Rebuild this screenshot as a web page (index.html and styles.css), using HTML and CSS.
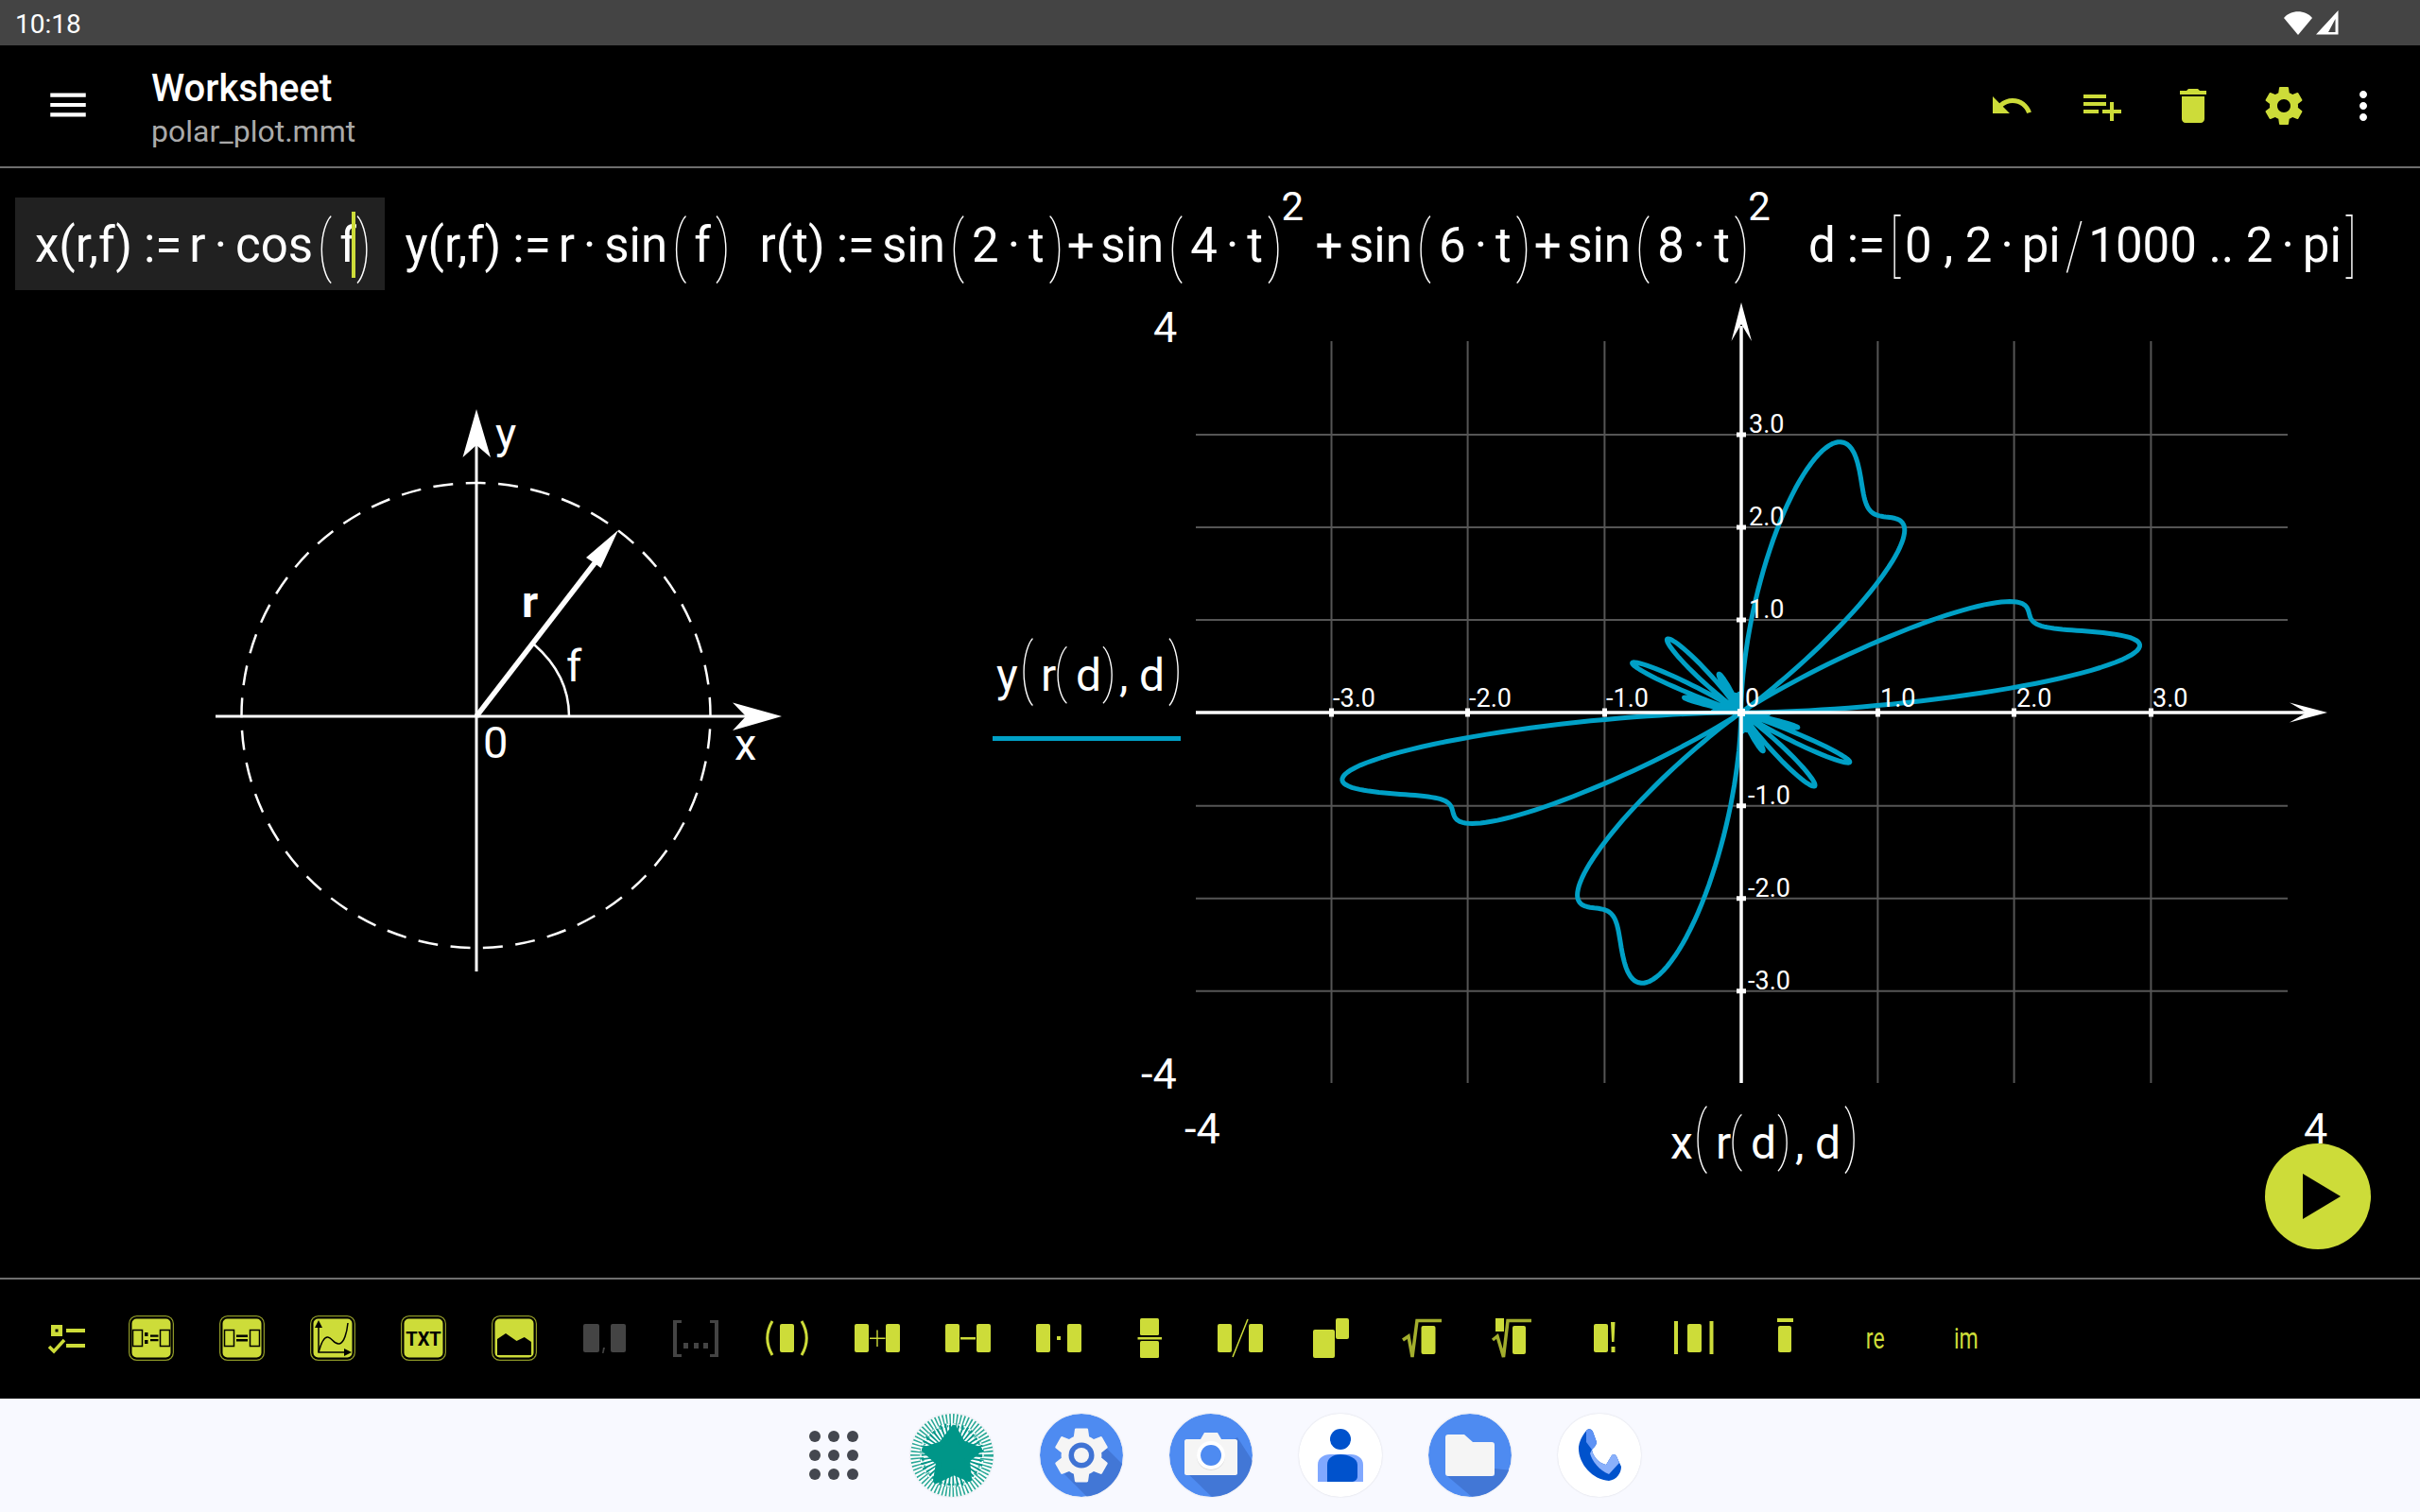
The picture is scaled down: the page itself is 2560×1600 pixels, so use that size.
FILE: index.html
```html
<!DOCTYPE html>
<html lang="en">
<head>
    <meta charset="UTF-8" />
    <title>Worksheet - polar_plot.mmt</title>
    <link rel="stylesheet" href="styles.css">
</head>
<body>

<div class="status-bar">
    <span class="status-time">10:18</span>
    <div class="status-icons">
        <svg width="30" height="25" viewBox="0 0 30 25"><path d="M0 7C7-2 23-2 30 7L15 25Z" fill="#fff"/></svg>
        <svg width="24" height="26" viewBox="0 0 24 26"><path fill-rule="evenodd" d="M23.5 0V25.500H0ZM20.500 9 13 23H20.500Z" fill="#fff"/></svg>
    </div>
</div>

<header class="app-bar">
    <svg class="menu-icon" viewBox="0 0 24 24"><path d="M3 18h18v-2H3v2zm0-5h18v-2H3v2zM3 6v2h18V6H3z" fill="#fff"/></svg>
    <div class="app-title">
        <div class="title-main">Worksheet</div>
        <div class="title-sub">polar_plot.mmt</div>
    </div>
    <div class="app-actions">
        <svg class="action" viewBox="0 0 24 24"><path d="M12.500 8c-2.650 0-5.050.99-6.900 2.600L2 7v9h9l-3.620-3.620c1.390-1.160 3.160-1.880 5.120-1.880 3.540 0 6.550 2.310 7.600 5.500l2.370-.78C21.080 11.030 17.150 8 12.500 8z"/></svg>
        <svg class="action" viewBox="0 0 24 24"><path d="M14 10H2v2h12v-2zm0-4H2v2h12V6zm4 8v-4h-2v4h-4v2h4v4h2v-4h4v-2h-4zM2 16h8v-2H2v2z"/></svg>
        <svg class="action" viewBox="0 0 24 24"><path d="M6 19c0 1.100.9 2 2 2h8c1.100 0 2-.9 2-2V7H6v12zM19 4h-3.500l-1-1h-5l-1 1H5v2h14V4z"/></svg>
        <svg class="action" viewBox="0 0 24 24"><path d="M19.430 12.980c.04-.32.07-.64.07-.98s-.03-.66-.07-.98l2.110-1.650c.19-.15.24-.42.12-.64l-2-3.460c-.12-.22-.39-.3-.61-.22l-2.490 1c-.52-.4-1.080-.73-1.690-.98l-.38-2.650C14.460 2.180 14.250 2 14 2h-4c-.25 0-.46.18-.49.42l-.38 2.650c-.61.25-1.170.59-1.690.98l-2.490-1c-.23-.09-.49 0-.61.22l-2 3.460c-.13.22-.07.49.12.64l2.110 1.650c-.04.32-.07.65-.07.98s.03.66.07.98l-2.110 1.650c-.19.15-.24.42-.12.64l2 3.460c.12.22.39.3.61.22l2.490-1c.52.4 1.080.73 1.690.98l.38 2.650c.03.24.24.42.49.42h4c.25 0 .46-.18.49-.42l.38-2.650c.61-.25 1.170-.59 1.690-.98l2.490 1c.23.09.49 0 .61-.22l2-3.460c.12-.22.07-.49-.12-.64l-2.010-1.650zM12 15.500c-1.930 0-3.500-1.570-3.500-3.500s1.570-3.500 3.500-3.500 3.500 1.570 3.500 3.500-1.570 3.500-3.500 3.500z"/></svg>
        <svg class="action action-more" viewBox="0 0 24 24"><path d="M12 8c1.100 0 2-.9 2-2s-.9-2-2-2-2 .9-2 2 .9 2 2 2zm0 2c-1.100 0-2 .9-2 2s.9 2 2 2 2-.9 2-2-.9-2-2-2zm0 6c-1.100 0-2 .9-2 2s.9 2 2 2 2-.9 2-2-.9-2-2-2z"/></svg>
    </div>
</header>

<main class="worksheet">
    <div class="formula-row">
        <div class="formula active">
            <span>x(r,f)</span><span class="wide">:=</span><span>r</span><span class="dot">·</span><span>cos</span><span class="big open">(</span><span>f</span><span class="caret"></span><span class="big">)</span>
        </div>
        <div class="formula">
            <span>y(r,f)</span><span class="wide">:=</span><span>r</span><span class="dot">·</span><span>sin</span><span class="big open">(</span><span>f</span><span class="big">)</span>
        </div>
        <div class="formula">
            <span>r(t)</span><span class="wide">:=</span><span>sin</span><span class="big open">(</span><span>2</span><span class="dot">·</span><span>t</span><span class="big">)</span><span class="plus">+</span><span>sin</span><span class="big open">(</span><span>4</span><span class="dot">·</span><span>t</span><span class="big">)</span><span class="sup">2</span><span class="plus">+</span><span>sin</span><span class="big open">(</span><span>6</span><span class="dot">·</span><span>t</span><span class="big">)</span><span class="plus">+</span><span>sin</span><span class="big open">(</span><span>8</span><span class="dot">·</span><span>t</span><span class="big">)</span><span class="sup">2</span>
        </div>
        <div class="formula">
            <span>d</span><span class="wide">:=</span><span class="big">[</span><span>0</span><span class="spaced">,</span><span>2</span><span class="dot">·</span><span>pi</span><span class="big">/</span><span>1000</span><span class="spaced">..</span><span>2</span><span class="dot">·</span><span>pi</span><span class="big">]</span>
        </div>
    </div>

    <div class="canvas-row">
        <!-- viewBoxes keep screen coordinates so the drawings are easy to check -->
        <svg class="picture" viewBox="220 420 640 620">
            <ellipse cx="503.500" cy="757" rx="248" ry="246" fill="none" stroke="#fff" stroke-width="2.500" stroke-dasharray="21 13.490" stroke-dashoffset="20"/>
            <path d="M228 758H790M504 1028V470" stroke="#fff" stroke-width="3" fill="none"/>
            <path d="M504 433 519 484 504 471 489.500 484Z M827 758 775 773 789 758 775 743.500Z" fill="#fff"/>
            <path d="M504 758 632 592" stroke="#fff" stroke-width="5.500"/>
            <path d="M654 561 635.500 601 629 596 620 590Z" fill="#fff"/>
            <path d="M602 758C602 728 588 702 565 682" stroke="#fff" stroke-width="2.500" fill="none"/>
            <text class="pic-text" x="524" y="475">y</text>
            <text class="pic-text pic-bold" x="552" y="653">r</text>
            <text class="pic-text" x="599" y="721">f</text>
            <text class="pic-text" x="511" y="802">0</text>
            <text class="pic-text" x="777" y="804">x</text>
        </svg>

        <svg class="plot" viewBox="1040 316 1440 940">
            <g class="grid">
                <path d="M1408.500 361V1146M1552.600 361V1146M1697.400 361V1146M1986.400 361V1146M2130.600 361V1146M2275.400 361V1146"/>
                <path d="M1265 460H2420M1265 558H2420M1265 656H2420M1265 852.700H2420M1265 950.700H2420M1265 1048.700H2420"/>
            </g>
            <path id="curve" class="curve" d=""/>
            <path d="M1265 754H2445M1842 1146V345" stroke="#fff" stroke-width="3.500" fill="none"/>
            <path d="M2462 754 2422 743.500 2440 754 2422 764.500Z M1842 320 1831.500 361 1842 343 1853 361Z" fill="#fff"/>
            <path d="M1406 749.500h5v9h-5zM1550 749.500h5v9h-5zM1695 749.500h5v9h-5zM1984 749.500h5v9h-5zM2128 749.500h5v9h-5zM2273 749.500h5v9h-5zM1837 457.500h10v5h-10zM1837 555.500h10v5h-10zM1837 653.500h10v5h-10zM1837 850.200h10v5h-10zM1837 948.200h10v5h-10zM1837 1046.200h10v5h-10zM1838 750h8v8h-8z" fill="#fff"/>

            <text class="tick" x="1410" y="748">-3.0</text>
            <text class="tick" x="1554" y="748">-2.0</text>
            <text class="tick" x="1699" y="748">-1.0</text>
            <text class="tick" x="1846" y="748">0</text>
            <text class="tick" x="1989" y="748">1.0</text>
            <text class="tick" x="2133" y="748">2.0</text>
            <text class="tick" x="2277" y="748">3.0</text>
            <text class="tick" x="1850" y="458">3.0</text>
            <text class="tick" x="1850" y="556">2.0</text>
            <text class="tick" x="1850" y="654">1.0</text>
            <text class="tick" x="1849" y="851">-1.0</text>
            <text class="tick" x="1849" y="949">-2.0</text>
            <text class="tick" x="1849" y="1047">-3.0</text>

            <text class="range" x="1220" y="362">4</text>
            <text class="range" x="1207" y="1152">-4</text>
            <text class="range" x="1253" y="1210">-4</text>
            <text class="range" x="2437" y="1210">4</text>

            <text class="axis-label" x="1054" y="731">y</text>
            <text class="axis-paren" transform="translate(1079 731) scale(1 1.470)">(</text>
            <text class="axis-label" x="1101" y="731">r</text>
            <text class="axis-paren" transform="translate(1115 731) scale(1 1.220)">(</text>
            <text class="axis-label" x="1138" y="731">d</text>
            <text class="axis-paren" transform="translate(1166 731) scale(1 1.220)">)</text>
            <text class="axis-label" x="1184" y="731">,</text>
            <text class="axis-label" x="1205" y="731">d</text>
            <text class="axis-paren" transform="translate(1236 731) scale(1 1.470)">)</text>
            <rect x="1050" y="779" width="199" height="5" fill="#00a0c6"/>

            <text class="axis-label" x="1767" y="1226">x</text>
            <text class="axis-paren" transform="translate(1792 1226) scale(1 1.470)">(</text>
            <text class="axis-label" x="1815" y="1226">r</text>
            <text class="axis-paren" transform="translate(1829 1226) scale(1 1.220)">(</text>
            <text class="axis-label" x="1852" y="1226">d</text>
            <text class="axis-paren" transform="translate(1880 1226) scale(1 1.220)">)</text>
            <text class="axis-label" x="1899" y="1226">,</text>
            <text class="axis-label" x="1920" y="1226">d</text>
            <text class="axis-paren" transform="translate(1951 1226) scale(1 1.470)">)</text>
        </svg>
    </div>

    <button class="run-button">
        <svg width="40" height="48" viewBox="0 0 40 48"><path d="M0 0 40 24 0 48Z"/></svg>
    </button>
</main>

<footer class="toolbar">
    <svg class="tool tool-list" viewBox="0 0 48 48">
        <path fill-rule="evenodd" d="M6 10h12v12H6zM10.500 14.500v3h3v-3z"/>
        <path d="M22 14h20v4H22zM22 30h20v4H22z"/>
        <path d="M4 33l5 5 11-12" fill="none" stroke="currentColor" stroke-width="3.500"/>
    </svg>
    <svg class="tool" viewBox="0 0 48 48">
        <rect class="btn-rim" x=".75" y=".75" width="46.500" height="46.500" rx="8"/><rect class="btn-face" x="2.500" y="2.500" width="43" height="43" rx="6"/>
        <path class="ink-line" d="M4.500 15.500h10v17h-10zM33.500 15.500h10v17h-10z"/>
        <path class="ink" d="M17 18h3.500v4H17zM17 26h3.500v4H17zM23 20.500h8.500v2.200H23zM23 25h8.500v2.200H23z"/>
    </svg>
    <svg class="tool" viewBox="0 0 48 48">
        <rect class="btn-rim" x=".75" y=".75" width="46.500" height="46.500" rx="8"/><rect class="btn-face" x="2.500" y="2.500" width="43" height="43" rx="6"/>
        <path class="ink-line" d="M5.500 15.500h10v17h-10zM32.500 15.500h10v17h-10z"/>
        <path class="ink" d="M18 20.500h12v2.500H18zM18 25h12v2.500H18z"/>
    </svg>
    <svg class="tool" viewBox="0 0 48 48">
        <rect class="btn-rim" x=".75" y=".75" width="46.500" height="46.500" rx="8"/><rect class="btn-face" x="2.500" y="2.500" width="43" height="43" rx="6"/>
        <path class="ink-line" d="M9 8V39H38"/>
        <path class="ink" d="M9 5 13 13H5ZM44 39 36 35V43Z"/>
        <path class="ink-line" d="M9 39C12 28 15 22 19 23 24 24 25 31 31 30 36 29 39 18 40 8"/>
    </svg>
    <svg class="tool" viewBox="0 0 48 48">
        <rect class="btn-rim" x=".75" y=".75" width="46.500" height="46.500" rx="8"/><rect class="btn-face" x="2.500" y="2.500" width="43" height="43" rx="6"/>
        <text class="txt-label" x="24" y="31.500">TXT</text>
    </svg>
    <svg class="tool" viewBox="0 0 48 48">
        <rect class="btn-rim" x=".75" y=".75" width="46.500" height="46.500" rx="8"/><rect class="btn-face" x="2.500" y="2.500" width="43" height="43" rx="6"/>
        <path class="ink" d="M6 25 15 19 26.500 27 34.700 23 42 28V42H6Z"/>
    </svg>
    <svg class="tool tool-off" viewBox="0 0 48 48">
        <rect x="1" y="9" width="17" height="30" rx="2"/><rect x="30" y="9" width="16" height="30" rx="2"/>
        <path d="M22 34h2l-1.500 6H21z"/>
    </svg>
    <svg class="tool tool-off" viewBox="0 0 48 48">
        <path d="M0 5h9v3H4v33h5v3H0zM48 5h-9v3h5v33h-5v3h9zM11 29h5v6h-5zM22 29h5v6h-5zM32 29h5v6h-5z"/>
    </svg>
    <svg class="tool" viewBox="0 0 48 48">
        <rect x="17" y="9" width="15" height="30" rx="2"/>
        <path d="M9 6C2 18 2 30 9 42" fill="none" stroke="currentColor" stroke-width="3"/><path d="M40 6C47 18 47 30 40 42" fill="none" stroke="currentColor" stroke-width="3"/>
    </svg>
    <svg class="tool" viewBox="0 0 48 48">
        <rect x="0" y="9" width="15" height="30" rx="2"/><rect x="33" y="9" width="15" height="30" rx="2"/>
        <path d="M23.300 15.500h1.400v8h7.800v1.400h-7.800v8.100h-1.400v-8.100H16v-1.400h7.300z"/>
    </svg>
    <svg class="tool" viewBox="0 0 48 48">
        <rect x="0" y="9" width="15" height="30" rx="2"/><rect x="33" y="9" width="15" height="30" rx="2"/>
        <path d="M16 23h16v2.500H16z"/>
    </svg>
    <svg class="tool" viewBox="0 0 48 48">
        <rect x="0" y="9" width="15" height="30" rx="2"/><rect x="33" y="9" width="15" height="30" rx="2"/>
        <path d="M22 22h4v4h-4z"/>
    </svg>
    <svg class="tool" viewBox="0 0 48 48">
        <rect x="14" y="3" width="20" height="18" rx="1.500"/><rect x="14" y="27" width="20" height="18" rx="1.500"/>
        <path d="M11.500 23h25.500v2.500H11.500z"/>
    </svg>
    <svg class="tool" viewBox="0 0 48 48">
        <rect x="0" y="9" width="15" height="30" rx="2"/><rect x="33" y="9" width="15" height="30" rx="2"/>
        <path d="M16 44 32 4" fill="none" stroke="currentColor" stroke-width="1.500"/>
    </svg>
    <svg class="tool" viewBox="0 0 48 48">
        <rect x="5" y="15" width="23" height="30" rx="2"/><rect x="29" y="3" width="14" height="22" rx="2"/>
    </svg>
    <svg class="tool" viewBox="0 0 48 48">
        <path class="root-line" d="M4 26 10 22 14 44 19 5.500H45"/>
        <rect x="23.500" y="11" width="15" height="30" rx="2"/>
    </svg>
    <svg class="tool" viewBox="0 0 48 48">
        <rect x="6" y="3" width="9" height="14"/>
        <path class="root-line" d="M3 26 8 22 14.500 44 19 5.500H44"/>
        <rect x="24" y="11" width="14" height="30" rx="2"/>
    </svg>
    <svg class="tool" viewBox="0 0 48 48">
        <rect x="14" y="9" width="15" height="30" rx="2"/>
        <path d="M32 7h4.500l-1 21h-2.500zM32.500 33h4v6h-4z"/>
    </svg>
    <svg class="tool" viewBox="0 0 48 48">
        <rect x="3" y="6" width="4" height="35"/><rect x="17" y="9" width="15" height="30" rx="2"/><rect x="40.500" y="6" width="4" height="35"/>
    </svg>
    <svg class="tool" viewBox="0 0 48 48">
        <rect x="16" y="3" width="17" height="4"/><rect x="17" y="11" width="14" height="28" rx="2"/>
    </svg>
    <div class="tool tool-text"><span>re</span></div>
    <div class="tool tool-text"><span>im</span></div>
</footer>

<nav class="dock">
    <div class="dock-dots">
        <i></i><i></i><i></i><i></i><i></i><i></i><i></i><i></i><i></i>
    </div>
    <div class="dock-icon">
        <svg viewBox="0 0 88 88">
            <circle cx="44" cy="44" r="44" fill="#fff"/>
            <circle cx="44" cy="44" r="37" fill="none" stroke="#2aa898" stroke-width="14" stroke-dasharray="1.500 2"/>
            <circle cx="44" cy="44" r="27" fill="none" stroke="#009688" stroke-width="14" stroke-dasharray="1.800 2.200"/>
            <circle cx="44" cy="44" r="33" fill="none" stroke="#fff" stroke-width="1.500" stroke-dasharray="3 3"/>
            <path d="M46 15 55 31 73 38 60 49 62 69 46 62 27 71 30 52 15 38 33 32Z" fill="#009688" stroke="#009688" stroke-width="6" stroke-linejoin="round"/>
        </svg>
    </div>
    <div class="dock-icon">
        <svg viewBox="0 0 88 88">
            <circle cx="44" cy="44" r="44" fill="#4e8bf1"/>
            <path d="M62 28 88 54V88H50L26 64Z" fill="#4277d6"/>
            <path transform="translate(9.800 9.800) scale(2.850)" d="M19.430 12.980c.04-.32.07-.64.07-.98s-.03-.66-.07-.98l2.110-1.650c.19-.15.24-.42.12-.64l-2-3.460c-.12-.22-.39-.3-.61-.22l-2.490 1c-.52-.4-1.080-.73-1.690-.98l-.38-2.650C14.460 2.180 14.250 2 14 2h-4c-.25 0-.46.18-.49.42l-.38 2.650c-.61.25-1.170.59-1.690.98l-2.490-1c-.23-.09-.49 0-.61.22l-2 3.460c-.13.22-.07.49.12.64l2.110 1.650c-.04.32-.07.65-.07.98s.03.66.07.98l-2.110 1.650c-.19.15-.24.42-.12.64l2 3.460c.12.22.39.3.61.22l2.490-1c.52.4 1.080.73 1.690.98l.38 2.650c.03.24.24.42.49.42h4c.25 0 .46-.18.49-.42l.38-2.650c.61-.25 1.170-.59 1.690-.98l2.490 1c.23.09.49 0 .61-.22l2-3.460c.12-.22.07-.49-.12-.64l-2.010-1.650z" fill="#f5f5f5"/>
            <circle cx="44" cy="44" r="13.500" fill="#3f73d4"/>
            <circle cx="44" cy="44" r="8" fill="#f5f5f5"/>
        </svg>
    </div>
    <div class="dock-icon">
        <svg viewBox="0 0 88 88">
            <circle cx="44" cy="44" r="44" fill="#4e8bf1"/>
            <path d="M72 25 88 50V88H45L16 60Z" fill="#4277d6"/>
            <path d="M16 29c0-1 1-2 2-2H33L37 20H51L55 27H70c1 0 2 1 2 2V63c0 1-1 2-2 2H18c-1 0-2-1-2-2Z" fill="#f5f5f5"/>
            <circle cx="44" cy="45" r="15" fill="#ddd"/>
            <circle cx="44" cy="44" r="15" fill="#fff"/>
            <circle cx="44" cy="44" r="11" fill="#4e8bf1"/>
        </svg>
    </div>
    <div class="dock-icon">
        <svg viewBox="0 0 88 88">
            <circle cx="44" cy="44" r="44" fill="#fff"/>
            <circle cx="44" cy="27" r="11" fill="#0052cc"/>
            <path d="M20 72V54C20 47 26 43 33 43H55C62 43 68 47 68 54V72Z" fill="#80a8ff"/>
            <path d="M30 72V54C30 47 36 43 44 43S62 47 62 54V66C62 70 59 72 55 72Z" fill="#0052cc"/>
        </svg>
    </div>
    <div class="dock-icon">
        <svg viewBox="0 0 88 88">
            <circle cx="44" cy="44" r="44" fill="#4e8bf1"/>
            <path d="M40 66H70V58L88 60V88H46L20 66Z" fill="#4277d6"/>
            <path d="M18 25c0-2 1-3 3-3H38L47 30H67c2 0 3 1 3 3V63c0 2-1 3-3 3H21c-2 0-3-1-3-3Z" fill="#f5f5f5"/>
        </svg>
    </div>
    <div class="dock-icon">
        <svg viewBox="0 0 88 88">
            <circle cx="44" cy="44" r="44" fill="#fff"/>
            <path d="M30 18C32 15 36 16 37 19L41 30C41 33 38 36 36 38 37 45 43 52 51 54L57 44C59 42 61 43 62 45L67 56C67 63 62 70 54 71 36 70 21 52 22 35 23 28 26 23 30 18Z" fill="#0052cc"/>
            <path d="M30 18C32 15 36 16 37 19L41 30C41 33 38 36 36 38L30 30Z" fill="#5f93f5"/>
            <path d="M36 38C37 45 43 52 51 54L57 44C59 42 61 43 62 45L65 52 54 64C44 60 36 50 34 42Z" fill="#8ab0fb"/>
        </svg>
    </div>
</nav>

<script src="script.js"></script>
</body>
</html>
```

FILE: styles.css
```css
* {
    box-sizing: border-box;
}

body {
    font-family: Roboto, sans-serif;
    margin: 0;
    width: 2560px;
    height: 1600px;
    overflow: hidden;
    background: #000;
    color: #fff;
    display: flex;
    flex-direction: column;
}

.status-bar {
    height: 48px;
    background: #444;
    display: flex;
    justify-content: space-between;
    align-items: center;
    padding: 0 86px 0 16px;
}

.status-time {
    font-size: 28px;
    padding-top: 2px;
}

.status-icons {
    display: flex;
    align-items: center;
    gap: 4px;
}

.app-bar {
    height: 130px;
    flex-shrink: 0;
    border-bottom: 2px solid #6e6e6e;
    display: flex;
    align-items: center;
    padding: 0 36px 2px 47px;
}

.menu-icon {
    width: 50px;
    height: 50px;
    margin-right: 63px;
}

.app-title {
    margin-top: 10px;
}

.title-main {
    font-size: 40px;
    font-weight: 500;
    line-height: 46px;
}

.title-sub {
    font-size: 32px;
    line-height: 44px;
    color: #aaa;
}

.app-actions {
    margin: 2px 0 0 auto;
    display: flex;
    gap: 48px;
}

.action {
    width: 48px;
    height: 48px;
    fill: #cddc39;
}

.action-more {
    fill: #fff;
    margin-left: -12px;
}

.worksheet {
    flex: 1;
    position: relative;
    padding: 31px 16px 0;
}

.formula-row {
    display: flex;
    height: 98px;
    margin-bottom: 9px;
}

.formula {
    display: flex;
    align-items: center;
    gap: 8px;
    padding: 2px 13px 0 21px;
    font-size: 51px;
    line-height: 1;
}

.formula.active {
    background: #212121;
    padding-right: 18px;
}

.big {
    display: block;
    margin: 0 -3px;
    font-weight: 100;
    transform: scaleY(1.38);
}

.big.open {
    margin-right: 0;
}

.wide {
    margin-left: 4px;
}

.dot {
    margin: 0 1px;
}

.plus {
    margin: 0 -1.5px;
}

.spaced {
    margin: 0 4.5px;
}

.sup {
    font-size: 42px;
    align-self: flex-start;
    margin: -13px 6px 0 -6px;
}

.caret {
    width: 4px;
    height: 70px;
    background: #cddc39;
    margin: 0 -4px 0 -13px;
}

.canvas-row {
    display: flex;
    align-items: flex-start;
}

.picture {
    width: 640px;
    height: 620px;
    margin: 104px 0 0 204px;
}

.pic-text {
    font-size: 47px;
    fill: #fff;
}

.pic-bold {
    font-weight: 700;
}

.plot {
    width: 1440px;
    height: 940px;
    margin-left: 180px;
}

.grid path {
    stroke: #555;
    stroke-width: 2;
    fill: none;
}

.curve {
    fill: none;
    stroke: #00a0c6;
    stroke-width: 5;
    stroke-linejoin: round;
}

.tick {
    font-size: 27px;
    fill: #fff;
}

.range {
    font-size: 45px;
    fill: #fff;
}

.axis-label {
    font-size: 48px;
    fill: #fff;
}

.axis-paren {
    font-size: 48px;
    font-weight: 100;
    fill: #fff;
}

.run-button {
    position: absolute;
    right: 52px;
    bottom: 30px;
    width: 112px;
    height: 112px;
    border: 0;
    border-radius: 50%;
    background: #cddc39;
    display: flex;
    align-items: center;
    justify-content: center;
    padding: 0 0 0 8px;
}

.toolbar {
    height: 128px;
    flex-shrink: 0;
    border-top: 2px solid #6e6e6e;
    display: flex;
    align-items: flex-start;
    gap: 48px;
    padding: 38px 0 0 48px;
}

.tool {
    width: 48px;
    height: 48px;
    flex-shrink: 0;
    fill: #cddc39;
    color: #cddc39;
}

.tool-list {
    margin-right: -8px;
}

.tool-off {
    fill: #444;
}

.btn-rim {
    fill: none;
    stroke: #8c9627;
    stroke-width: 1.5;
}

.btn-face {
    fill: #cddc39;
    stroke: #000;
    stroke-width: 2;
}

.ink {
    fill: #000;
}

.ink-line {
    fill: none;
    stroke: #000;
    stroke-width: 1.5;
}

.txt-label {
    font-size: 20px;
    font-weight: 700;
    fill: #000;
    text-anchor: middle;
}

.root-line {
    fill: none;
    stroke: #a3ae2d;
    stroke-width: 3.5;
}

.tool-text {
    display: flex;
    align-items: center;
    justify-content: center;
    font-size: 32px;
}

.tool-text span {
    display: block;
    transform: scaleX(0.72);
}

.dock {
    height: 120px;
    flex-shrink: 0;
    background: #f8f9ff;
    display: flex;
    align-items: center;
    gap: 49px;
    padding-left: 856px;
}

.dock-dots {
    display: grid;
    grid-template-columns: repeat(3, 12px);
    gap: 8px;
    margin-right: 6px;
}

.dock-dots i {
    display: block;
    width: 12px;
    height: 12px;
    border-radius: 50%;
    background: #44474f;
}

.dock-icon {
    width: 88px;
    height: 88px;
    border-radius: 50%;
    overflow: hidden;
    box-shadow: 0 0 2px rgba(0, 0, 0, 0.15);
}

.dock-icon svg {
    display: block;
    width: 88px;
    height: 88px;
}
```

FILE: script.js
```js
// r(t) from the worksheet, sampled over d = [0, 2*pi/1000 .. 2*pi]
function radius(t) {
    var a = Math.sin(4 * t);
    var b = Math.sin(8 * t);
    return Math.sin(2 * t) + a * a + Math.sin(6 * t) + b * b;
}

var originX = 1841.7, originY = 754, unitX = 144.4, unitY = 98;
var points = [];

for (var i = 0; i <= 1000; i++) {
    var t = i * 2 * Math.PI / 1000;
    var r = radius(t);
    var x = originX + unitX * r * Math.cos(t);
    var y = originY - unitY * r * Math.sin(t);
    points.push(x.toFixed(1) + ' ' + y.toFixed(1));
}

document.getElementById('curve').setAttribute('d', 'M' + points.join('L'));
```
